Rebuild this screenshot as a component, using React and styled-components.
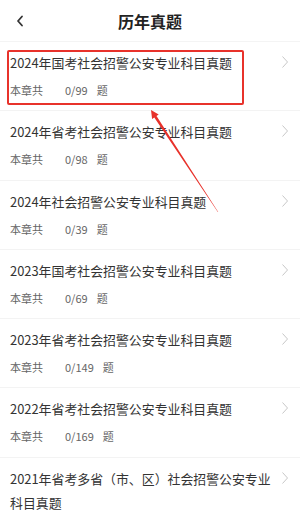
import styled, { createGlobalStyle } from "styled-components"

const Global = createGlobalStyle`
  body {
    margin: 0;
    background: #fff;
    font-family: "Noto Sans CJK SC", "Noto Sans", sans-serif;
  }
`

const papers = [
  { title: "2024年国考社会招警公安专业科目真题", done: 0, total: 99 },
  { title: "2024年省考社会招警公安专业科目真题", done: 0, total: 98 },
  { title: "2024年社会招警公安专业科目真题", done: 0, total: 39 },
  { title: "2023年国考社会招警公安专业科目真题", done: 0, total: 69 },
  { title: "2023年省考社会招警公安专业科目真题", done: 0, total: 149 },
  { title: "2022年省考社会招警公安专业科目真题", done: 0, total: 169 },
  { title: "2021年省考多省（市、区）社会招警公安专业科目真题", done: 0, total: 56 },
]

const App = () => {
  return (
    <Page>
      <Global />
      <Header>
        <Back>
          <svg width="10" height="14" viewBox="0 0 10 14">
            <path d="M7 2.5 L3 7 L7 11.5" fill="none" stroke="#333" strokeWidth="1.8" strokeLinecap="round" strokeLinejoin="round" />
          </svg>
        </Back>
        <Title>历年真题</Title>
      </Header>

      <List>
        {papers.map((p) => (
          <Row key={p.title}>
            <Info>
              <Name>{p.title}</Name>
              <Meta>
                本章共
                <Count>{p.done}/{p.total}</Count>
                题
              </Meta>
            </Info>
            <Chevron width="8" height="14" viewBox="0 0 8 14">
              <path d="M1.5 1.5 L6.5 7 L1.5 12.5" fill="none" stroke="#c8c8c8" strokeWidth="1" />
            </Chevron>
          </Row>
        ))}
      </List>

      <Highlight />
      <Arrow width="300" height="522" viewBox="0 0 300 522">
        <polygon points="151,110 158.7,114.5 156.5,116 218.2,211.9 217.8,212.1 154.3,117.4 152.1,118.9" fill="#e8322b" />
      </Arrow>
    </Page>
  )
}

export default App

const Page = styled.div`
  position: relative;
  width: 300px;
  height: 522px;
  overflow: hidden;
`

const Header = styled.div`
  position: relative;
  height: 41px;
  display: flex;
  align-items: center;
  justify-content: center;
  border-bottom: 1px solid #f4f4f4;
`

const Back = styled.div`
  position: absolute;
  left: 15px;
  top: 14px;
  display: flex;
`

const Title = styled.h1`
  margin: 0;
  font-size: 16px;
  font-weight: 700;
  color: #222;
`

const List = styled.div`
  display: flex;
  flex-direction: column;
`

const Row = styled.div`
  display: flex;
  align-items: flex-start;
  padding: 9px 11px 10.3px 10px;
  border-bottom: 1px solid #f3f3f3;
`

const Info = styled.div`
  flex: 1;
  min-width: 0;
  padding-right: 5px;
`

const Name = styled.div`
  font-size: 12.9px;
  line-height: 24px;
  color: #333;
`

const Meta = styled.div`
  margin-top: 5px;
  font-size: 11px;
  line-height: 20px;
  color: #666;
`

const Count = styled.span`
  margin: 0 9px 0 22px;
`

const Chevron = styled.svg`
  flex: none;
  margin-top: 4px;
  margin-left: 2px;
`

const Highlight = styled.div`
  position: absolute;
  left: 7px;
  top: 50px;
  width: 233px;
  height: 51px;
  border: 2px solid #e8322b;
  border-radius: 2px;
`

const Arrow = styled.svg`
  position: absolute;
  left: 0;
  top: 0;
  pointer-events: none;
`
